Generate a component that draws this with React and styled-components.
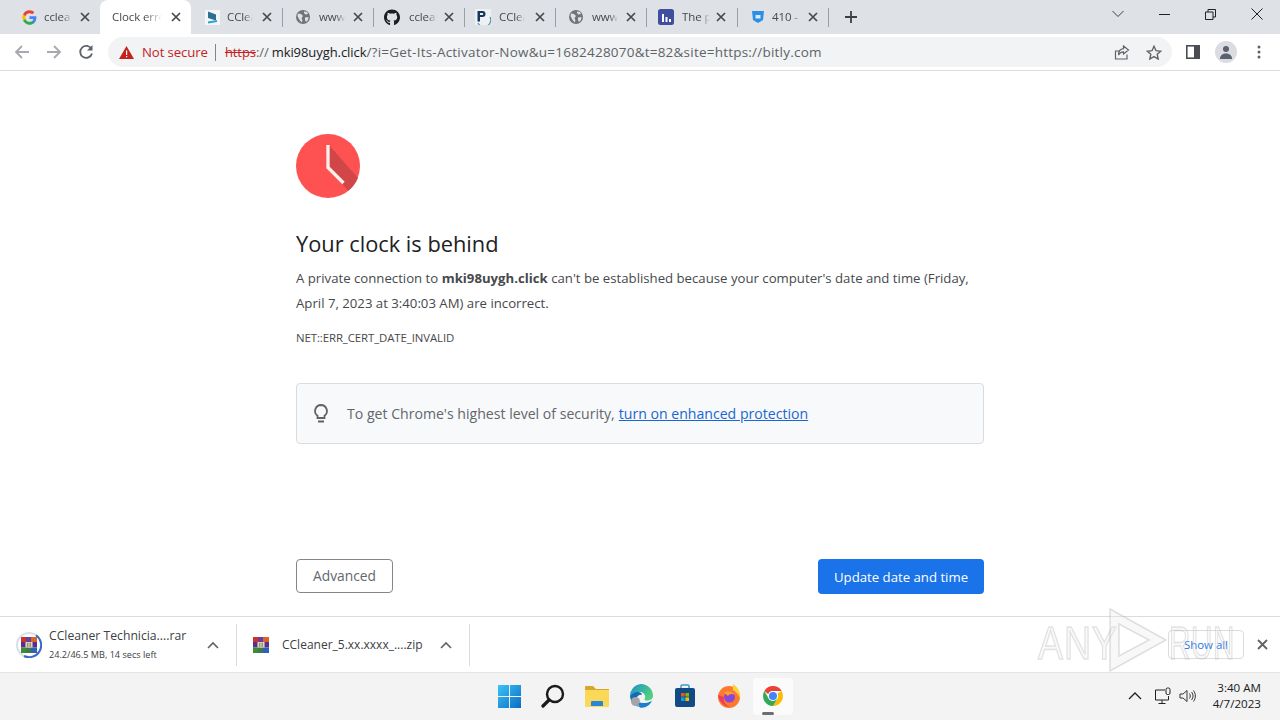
import React from 'react';
import styled, { createGlobalStyle } from 'styled-components';
import { FaGithub } from 'react-icons/fa';

const Global = createGlobalStyle`
  html, body { margin: 0; padding: 0; background: #fff; }
  body { font-family: "Open Sans", "Noto Sans", "Liberation Sans", sans-serif; overflow: hidden; }
`;

const Page = styled.div`
  position: relative; width: 1280px; height: 720px; display: flex; flex-direction: column; overflow: hidden;
`;
const TabStrip = styled.div`
  height: 34px; flex: none; background: #dee1e6; display: flex; align-items: center; padding-left: 9px;
`;
const Tab = styled.div`
  position: relative; width: 91px; height: 34px; flex: none; display: flex; align-items: center;
  padding-left: ${p => p.$pad}px; box-sizing: border-box;
  background: ${p => (p.$active ? '#fff' : 'transparent')};
  border-radius: ${p => (p.$active ? '8px 8px 0 0' : '0')};
  &::after {
    content: ''; display: ${p => (p.$sep ? 'block' : 'none')}; position: absolute; right: -1px; top: 8px; width: 1px; height: 19px; background: #9aa0a6;
  }
`;
const Favicon = styled.span`
  width: 16px; height: 16px; flex: none; display: flex; align-items: center; justify-content: center; margin-right: ${p => p.$gap}px;
`;
const TabTitle = styled.span`
  width: ${p => p.$w}px; flex: none; overflow: hidden; white-space: nowrap; font-size: 11.5px; line-height: 16px; margin-top: -1px; color: #45494e; letter-spacing: -0.1px;
  -webkit-mask-image: linear-gradient(90deg, #000 65%, transparent);
  mask-image: linear-gradient(90deg, #000 65%, transparent);
`;
const TabClose = styled.svg`
  width: 10px; height: 10px; flex: none; position: absolute; right: ${p => p.$r}px; top: 12px;
`;
const NewTab = styled.svg`
  width: 14px; height: 14px; flex: none; margin-left: 16px;
`;
const WinControls = styled.div`
  margin-left: auto; display: flex; align-items: center; height: 28px; margin-top: -6px; padding-right: 17px; gap: 35px;
`;
const Toolbar = styled.div`
  height: 36px; flex: none; background: #fff; border-bottom: 1px solid #dadce0; display: flex; align-items: center; padding-left: 14px;
`;
const NavIcon = styled.svg`
  width: 16px; height: 16px; flex: none; margin-right: ${p => p.$mr}px;
`;
const Omnibox = styled.div`
  width: 1064px; height: 30px; flex: none; margin-left: 14px; border-radius: 15px; background: #f1f3f4; display: flex; align-items: center; padding: 0 10px 0 11px; box-sizing: border-box;
`;
const NotSecure = styled.span`
  font-size: 13.2px; color: #c5221f; margin-left: 8px; letter-spacing: -0.1px;
`;
const OmniSep = styled.span`
  width: 1px; height: 17px; background: #80868b; margin: 0 9px 0 7px;
`;
const UrlText = styled.span`
  font-size: 13px; color: #5f6368; white-space: nowrap; letter-spacing: -0.07px;
`;
const Scheme = styled.span`
  color: #c5221f; text-decoration: line-through;
`;
const Host = styled.span`
  color: #202124; margin-left: 3px;
`;
const UrlRest = styled.span`
  font-size: 13.5px; letter-spacing: .22px;
`;
const OmniRight = styled.div`
  margin-left: auto; display: flex; align-items: center; gap: 16px;
`;
const ToolRight = styled.div`
  display: flex; align-items: center; margin-left: 14px; gap: 15px;
`;
const Avatar = styled.span`
  width: 22px; height: 22px; border-radius: 50%; background: #dadce0; display: flex; align-items: center; justify-content: center; overflow: hidden;
`;
const MenuDots = styled.svg`
  width: 4px; height: 14px; flex: none; margin-left: 5px;
`;
const Main = styled.main`
  flex: 1; min-height: 0; padding: 63px 296px 0; box-sizing: border-box; display: flex; flex-direction: column; background: #fff;
`;
const ClockWrap = styled.svg`
  width: 64px; height: 64px; flex: none;
`;
const Title = styled.h1`
  margin: 31px 0 0; font-size: 21.8px; line-height: 30px; font-weight: 400; color: #202124;
`;
const Para = styled.p`
  margin: 7px 0 0; font-size: 13.2px; line-height: 25px; color: #46494c;
`;
const Code = styled.div`
  margin-top: 13px; font-size: 11.4px; line-height: 18px; color: #46494c; letter-spacing: -0.09px;
`;
const Notice = styled.div`
  margin-top: 36px; height: 61px; box-sizing: border-box; border: 1px solid #dadce0; border-radius: 4px; background: #f8f9fa; display: flex; align-items: center; padding-left: 14px; font-size: 14.1px; color: #63676b;
`;
const NoticeIcon = styled.svg`
  width: 20px; height: 22px; flex: none; margin-right: 16px;
`;
const NoticeLink = styled.a`
  color: #1967d2; text-decoration: underline; margin-left: 4px;
`;
const Buttons = styled.div`
  margin-top: 115px; display: flex; justify-content: space-between; align-items: flex-start;
`;
const Btn = styled.button`
  font-family: inherit; box-sizing: border-box; border-radius: 4px; cursor: pointer;
  padding: 0 0 ${p => (p.$primary ? 0 : 2)}px;
  font-size: ${p => (p.$primary ? 13.2 : 13.8)}px;
  height: ${p => (p.$primary ? 35 : 34)}px; width: ${p => (p.$primary ? 166 : 97)}px;
  background: ${p => (p.$primary ? '#1a73e8' : '#fff')};
  color: ${p => (p.$primary ? '#fff' : '#63676b')};
  border: ${p => (p.$primary ? 'none' : '1px solid #80868b')};
`;
const Shelf = styled.div`
  height: 55px; flex: none; border-top: 1px solid #dadce0; border-bottom: 1px solid #e4e4e4; background: #fff; display: flex; align-items: center;
`;
const DownloadItem = styled.div`
  height: 42px; width: ${p => p.$w}px; flex: none; box-sizing: border-box; border-right: 1px solid #dadce0; display: flex; align-items: center; padding-left: ${p => p.$pad}px; position: relative;
`;
const DlText = styled.div`
  display: flex; flex-direction: column; margin-left: ${p => p.$ml}px; white-space: nowrap; padding-top: ${p => p.$top}px;
`;
const DlName = styled.span`
  font-size: ${p => p.$fs}px; line-height: 17px; color: #3c4043;
`;
const DlSub = styled.span`
  font-size: 9.15px; line-height: 22px; color: #3c4043;
`;
const Caret = styled.svg`
  width: 12px; height: 8px; position: absolute; right: 17px; top: 17px;
`;
const ShelfEnd = styled.div`
  margin-left: auto; display: flex; align-items: center; padding-right: 12px; gap: 13px;
`;
const ShowAll = styled.button`
  width: 76px; height: 29px; border: 1px solid #dadce0; border-radius: 4px; background: #fff; color: #1a73e8; font-family: inherit; font-size: 11.4px; padding: 0;
`;
const Taskbar = styled.div`
  height: 47px; flex: none; background: #f3f3f3; display: flex; align-items: center; position: relative;
`;
const TaskIcons = styled.div`
  display: flex; align-items: center; margin-left: 487px; height: 47px;
`;
const TaskSlot = styled.div`
  width: ${p => (p.$active ? 40 : 44)}px; height: 37px; flex: none; display: flex; align-items: center; justify-content: center; position: relative; margin: 0 ${p => (p.$active ? 2 : 0)}px 1px;
  background: ${p => (p.$active ? '#fbfbfb' : 'transparent')};
  border-radius: 4px;
  &::after {
    content: ''; display: ${p => (p.$active ? 'block' : 'none')}; position: absolute; left: 9px; bottom: 0; width: 12px; height: 3px; border-radius: 2px; background: #6e6e6e;
  }
`;
const Tray = styled.div`
  margin-left: auto; display: flex; align-items: center; padding-right: 19px; margin-bottom: 1px;
`;
const TrayIcon = styled.svg`
  width: ${p => p.$w}px; height: 18px; flex: none; margin-right: ${p => p.$mr}px;
`;
const Clock = styled.div`
  display: flex; flex-direction: column; align-items: flex-end; font-size: 11.6px; line-height: 16px; color: #202020;
`;
const Watermark = styled.div`
  position: absolute; left: 1036px; top: 606px; width: 200px; height: 70px; pointer-events: none;
`;
const WmText = styled.span`
  position: absolute; top: 9px; font-family: "Liberation Sans", sans-serif; font-size: 47px; color: rgba(235,235,235,.28); -webkit-text-stroke: 1.5px rgba(170,170,170,.32); transform-origin: left center; letter-spacing: 1px;
`;
const WmAny = styled(WmText)`
  left: 2px; transform: scaleX(.8);
`;
const WmRun = styled(WmText)`
  left: 133px; transform: scaleX(.63);
`;
const WmPlay = styled.svg`
  position: absolute; left: 70px; top: 1px; width: 62px; height: 66px;
`;

const X = ({ r }) => (
  <TabClose $r={r} viewBox="0 0 10 10"><path d="M1 1l8 8M9 1L1 9" stroke="#45494e" strokeWidth="1.7" /></TabClose>
);
const GoogleG = () => (
  <svg width="15" height="15" viewBox="0 0 24 24">
    <path fill="#4285F4" d="M23 12.3c0-.8-.1-1.600-.2-2.300H12v4.400h6.200c-.3 1.400-1.100 2.600-2.300 3.400v2.900h3.700c2.200-2 3.400-5 3.400-8.400z"/>
    <path fill="#34A853" d="M12 23.500c3.100 0 5.700-1 7.600-2.800l-3.700-2.900c-1 .7-2.300 1.100-3.900 1.100-3 0-5.500-2-6.400-4.700H1.800v3C3.700 21 7.600 23.500 12 23.500z"/>
    <path fill="#FBBC05" d="M5.600 14.200c-.5-1.400-.5-3 0-4.400v-3H1.800a11.500 11.500 0 0 0 0 10.400l3.800-3z"/>
    <path fill="#EA4335" d="M12 5.100c1.700 0 3.200.6 4.400 1.700l3.300-3.300C17.700 1.600 15.100.5 12 .5 7.600.5 3.700 3 1.800 6.800l3.800 3c.9-2.700 3.400-4.700 6.400-4.700z"/>
  </svg>
);
const Globe = () => (
  <svg width="14" height="14" viewBox="0 0 14 14">
    <circle cx="7" cy="7" r="7" fill="#70757a"/>
    <path d="M2 3.500l3 .5 2 2-1.500 2 1 2.500-1 2L3 9 1.500 6zM8 1.500l3 .5 1 2-2.500.5L8 3zM9 7.500l3.500-.5-.5 3-2 2-1-2z" fill="#dfe1e5"/>
  </svg>
);
const WinRar = () => (
  <svg width="16" height="16" viewBox="0 0 16 16" style={{ display: 'block' }}>
    <rect width="6" height="5" fill="#c8352c"/>
    <rect x="5" width="6" height="5" fill="#6a3fa0"/>
    <rect x="10" width="6" height="5" fill="#d8642a"/>
    <rect y="5" width="16" height="5.500" fill="#5a2f8c"/>
    <rect y="10.500" width="6" height="5.500" fill="#3f8a3a"/>
    <rect x="5" y="10.500" width="6" height="5.500" fill="#3c7a4a"/>
    <rect x="10" y="10.500" width="6" height="5.500" fill="#2f62b0"/>
    <rect x="4.500" y="5" width="7" height="5.500" fill="#efe7cf"/>
    <path d="M6.300 5.500v4.500M8 5.500v4.500M9.700 5.500v4.500" stroke="#7a6440" strokeWidth=".8"/>
  </svg>
);

export default function App() {
  return (
    <Page>
      <Global />
      <TabStrip>
        <Tab $pad={12}>
          <Favicon $gap={7}><GoogleG /></Favicon><TabTitle $w={28}>cclea</TabTitle><X r={10} />
        </Tab>
        <Tab $pad={12} $active>
          <TabTitle $w={50}>Clock error</TabTitle><X r={10} />
        </Tab>
        <Tab $pad={13} $sep>
          <Favicon $gap={7}>
            <svg width="15" height="15" viewBox="0 0 15 15"><rect width="15" height="15" fill="#f4f6f8"/><path d="M3 1.500l8 3v6L3 8z" fill="#2f6f8f"/><path d="M3 12.500l9-1.500" stroke="#2ba6cf" strokeWidth="2"/></svg>
          </Favicon><TabTitle $w={26}>CCleaner</TabTitle><X r={10} />
        </Tab>
        <Tab $pad={13} $sep>
          <Favicon $gap={8}><Globe /></Favicon><TabTitle $w={26}>www.ccleaner</TabTitle><X r={10} />
        </Tab>
        <Tab $pad={11} $sep>
          <Favicon $gap={9}><FaGithub size={17} color="#1b1f23" /></Favicon><TabTitle $w={28}>ccleaner</TabTitle><X r={10} />
        </Tab>
        <Tab $pad={11} $sep>
          <Favicon $gap={8}>
            <svg width="16" height="16" viewBox="0 0 16 16"><rect width="16" height="16" rx="1" fill="#eef1f3"/><path d="M3 14a6.500 6.500 0 0 0 12-6" fill="none" stroke="#5b93a6" strokeWidth="1.200"/><path d="M2.500 2h5a3 3 0 0 1 0 6H5v4.500H2.500zM5 4v2h2.300a1 1 0 0 0 0-2z" fill="#16365c" fillRule="evenodd"/></svg>
          </Favicon><TabTitle $w={26}>CCleaner</TabTitle><X r={10} />
        </Tab>
        <Tab $pad={13} $sep>
          <Favicon $gap={8}><Globe /></Favicon><TabTitle $w={26}>www.ccleaner</TabTitle><X r={10} />
        </Tab>
        <Tab $pad={12} $sep>
          <Favicon $gap={8}>
            <svg width="16" height="16" viewBox="0 0 16 16"><rect width="16" height="16" rx="2.500" fill="#3f4f9e"/><path d="M4 5h2v8H4zM7.500 8h2v5h-2zM11 10h2v3h-2z" fill="#fff"/></svg>
          </Favicon><TabTitle $w={28}>The page</TabTitle><X r={11} />
        </Tab>
        <Tab $pad={13} $sep>
          <Favicon $gap={6}>
            <svg width="14" height="14" viewBox="0 0 14 14"><path d="M1 1h12l-1 9-5 3-5-3z" fill="#2b8fe6"/><rect x="4.500" y="5" width="5" height="3.500" fill="#d7ecff"/></svg>
          </Favicon><TabTitle $w={30}>410 - Gone</TabTitle><X r={10} />
        </Tab>
        <NewTab viewBox="0 0 14 14"><path d="M7 1v12M1 7h12" stroke="#3c4043" strokeWidth="1.800"/></NewTab>
        <WinControls>
          <svg width="12" height="8" viewBox="0 0 12 8"><path d="M.5 1l5.500 5.500L11.500 1" stroke="#3c4043" fill="none"/></svg>
          <svg width="11" height="11" viewBox="0 0 11 11"><path d="M0 5.500h11" stroke="#202124"/></svg>
          <svg width="11" height="11" viewBox="0 0 11 11"><path d="M.5 3h7.500v7.500H.5zM3 3V.5h7.500V8H8" stroke="#202124" fill="none"/></svg>
          <svg width="12" height="12" viewBox="0 0 12 12"><path d="M.5.500l11 11M11.500.5l-11 11" stroke="#202124"/></svg>
        </WinControls>
      </TabStrip>
      <Toolbar>
        <NavIcon $mr={16} viewBox="0 0 16 16"><path d="M15 8H2M8 2L2 8l6 6" fill="none" stroke="#a6a9ad" strokeWidth="1.800"/></NavIcon>
        <NavIcon $mr={16} viewBox="0 0 16 16"><path d="M1 8h13M8 2l6 6-6 6" fill="none" stroke="#a6a9ad" strokeWidth="1.800"/></NavIcon>
        <NavIcon $mr={0} viewBox="0 0 16 16"><path d="M13.500 5A6 6 0 1 0 14 9.500" fill="none" stroke="#5f6368" strokeWidth="1.800"/><path d="M14.500 1v5.500H9z" fill="#5f6368"/></NavIcon>
        <Omnibox>
          <svg width="15" height="13" viewBox="0 0 15 13"><path d="M7.500 0L15 13H0z" fill="#c5221f"/><path d="M7 4.500h1.200v4.500H7zM7 10h1.200v1.300H7z" fill="#fff"/></svg>
          <NotSecure>Not secure</NotSecure>
          <OmniSep />
          <UrlText><Scheme>https</Scheme>://<Host>mki98uygh.click</Host><UrlRest>/?i=Get-Its-Activator-Now&amp;u=1682428070&amp;t=82&amp;site=https://bitly.com</UrlRest></UrlText>
          <OmniRight>
            <svg width="16" height="15" viewBox="0 0 16 15"><path d="M13 9.500V14H1.500V6H5M9.500 1l5 4-5 4V6.800C7 6.800 5.500 8 4.500 10c0-3.500 2-6 5-6.300z" fill="none" stroke="#5f6368" strokeWidth="1.200"/></svg>
            <svg width="16" height="15" viewBox="0 0 16 15"><path d="M8 1.300l2 4.400 4.700.5-3.500 3.100 1 4.700L8 11.600l-4.200 2.400 1-4.700-3.500-3.100L6 5.700z" fill="none" stroke="#5f6368" strokeWidth="1.400"/></svg>
          </OmniRight>
        </Omnibox>
        <ToolRight>
          <svg width="14" height="14" viewBox="0 0 14 14"><rect x=".8" y=".8" width="12.400" height="12.400" fill="none" stroke="#4a4e52" strokeWidth="1.600"/><rect x="8" y="1" width="5" height="12" fill="#4a4e52"/></svg>
          <Avatar>
            <svg width="14" height="14" viewBox="0 0 14 14"><circle cx="7" cy="4" r="3" fill="#5a6071"/><path d="M1 14c0-4 3-5.500 6-5.500s6 1.500 6 5.500z" fill="#5a6071"/></svg>
          </Avatar>
          <MenuDots viewBox="0 0 4 14"><circle cx="2" cy="2" r="1.500" fill="#5f6368"/><circle cx="2" cy="7" r="1.500" fill="#5f6368"/><circle cx="2" cy="12" r="1.500" fill="#5f6368"/></MenuDots>
        </ToolRight>
      </Toolbar>
      <Main>
        <ClockWrap viewBox="0 0 64 64">
          <circle cx="32" cy="32" r="32" fill="#fe5252"/>
          <path d="M33 11l29 33A32 32 0 0 1 52 57L32 32z" fill="#c94545" opacity=".85"/>
          <path d="M32 11v22.500L47.500 49" fill="none" stroke="#fff2ee" strokeWidth="3.300"/>
        </ClockWrap>
        <Title>Your clock is behind</Title>
        <Para>A private connection to <b>mki98uygh.click</b> can't be established because your computer's date and time (Friday, April 7, 2023 at 3:40:03 AM) are incorrect.</Para>
        <Code>NET::ERR_CERT_DATE_INVALID</Code>
        <Notice>
          <NoticeIcon viewBox="0 0 20 22"><path d="M10 2a6 6 0 0 0-3.500 10.800V15h7v-2.200A6 6 0 0 0 10 2zM7 18.500h6" fill="none" stroke="#5f6368" strokeWidth="1.800"/></NoticeIcon>
          To get Chrome's highest level of security,<NoticeLink href="#">turn on enhanced protection</NoticeLink>
        </Notice>
        <Buttons>
          <Btn>Advanced</Btn>
          <Btn $primary>Update date and time</Btn>
        </Buttons>
      </Main>
      <Shelf>
        <DownloadItem $w={237} $pad={16}>
          <svg width="26" height="26" viewBox="0 0 26 26" style={{ flex: 'none' }}>
            <circle cx="13" cy="13" r="12" fill="none" stroke="#d7dfe9" strokeWidth="2"/>
            <path d="M8 24A12 12 0 0 0 20 3.300" fill="none" stroke="#3b68c8" strokeWidth="2"/>
            <foreignObject x="5" y="5" width="16" height="16"><WinRar /></foreignObject>
          </svg>
          <DlText $ml={7} $top={4}><DlName $fs={12.2}>CCleaner Technicia....rar</DlName><DlSub>24.2/46.5 MB, 14 secs left</DlSub></DlText>
          <Caret viewBox="0 0 12 8"><path d="M1 7l5-5 5 5" fill="none" stroke="#5f6368" strokeWidth="1.600"/></Caret>
        </DownloadItem>
        <DownloadItem $w={233} $pad={16}>
          <WinRar />
          <DlText $ml={13} $top={0}><DlName $fs={12}>CCleaner_5.xx.xxxx_....zip</DlName></DlText>
          <Caret viewBox="0 0 12 8"><path d="M1 7l5-5 5 5" fill="none" stroke="#5f6368" strokeWidth="1.600"/></Caret>
        </DownloadItem>
        <ShelfEnd>
          <ShowAll>Show all</ShowAll>
          <svg width="11" height="11" viewBox="0 0 11 11"><path d="M1 1l9 9M10 1l-9 9" stroke="#5f6368" strokeWidth="1.800"/></svg>
        </ShelfEnd>
      </Shelf>
      <Taskbar>
        <TaskIcons>
          <TaskSlot>
            <svg width="23" height="23" viewBox="0 0 24 24"><defs><linearGradient id="w" x1="0" y1="0" x2="1" y2="1"><stop offset="0" stopColor="#3bc4f5"/><stop offset="1" stopColor="#0a6cc4"/></linearGradient></defs><path d="M0 0h11.500v11.500H0zM12.500 0H24v11.500H12.500zM0 12.500h11.500V24H0zM12.500 12.500H24V24H12.500z" fill="url(#w)"/></svg>
          </TaskSlot>
          <TaskSlot>
            <svg width="24" height="24" viewBox="0 0 24 24"><circle cx="14" cy="10" r="8" fill="none" stroke="#1a1a1a" strokeWidth="2.400"/><path d="M8 16l-6 6" stroke="#1a1a1a" strokeWidth="3.200" strokeLinecap="round"/></svg>
          </TaskSlot>
          <TaskSlot>
            <svg width="24" height="22" viewBox="0 0 24 22"><path d="M0 2a1 1 0 0 1 1-1h7l3 3h13v4H0z" fill="#d9a62c"/><path d="M0 5h24v16a1 1 0 0 1-1 1H1a1 1 0 0 1-1-1z" fill="#fcd858"/><path d="M6 21v-4a1 1 0 0 1 1-1h10a1 1 0 0 1 1 1v4z" fill="#2a86d5"/></svg>
          </TaskSlot>
          <TaskSlot>
            <svg width="24" height="24" viewBox="0 0 24 24"><defs><linearGradient id="eg" x1="0" y1="0" x2="1" y2=".6"><stop offset="0" stopColor="#1b8fd0"/><stop offset="1" stopColor="#52d17c"/></linearGradient></defs><path d="M12 0a12 12 0 0 1 12 12c0 3-3 4.500-6 4.500-2.500 0-3-1-2-2.500 1-2-1-6-5-6-4 0-8 2-10 5A12 12 0 0 1 12 0z" fill="url(#eg)"/><path d="M1 13c1-3 5-5 8-5 2 0 4 1 4 3-3-1-6 2-6 6 0 3 2 5 4 6A12 12 0 0 1 1 13z" fill="#1668b5"/><circle cx="6.500" cy="17.500" r="4.500" fill="#a5a5a5"/><path d="M11 23.500c-2-2-2-4 0-5 3 1 8 1 12-2-2 5-7 8-12 7z" fill="#1b7fc9"/></svg>
          </TaskSlot>
          <TaskSlot>
            <svg width="24" height="24" viewBox="0 0 24 24"><path d="M2 6a2 2 0 0 1 2-2h16a2 2 0 0 1 2 2v15a2 2 0 0 1-2 2H4a2 2 0 0 1-2-2z" fill="#114a84"/><path d="M8 4V2a1 1 0 0 1 1-1h6a1 1 0 0 1 1 1v2" fill="none" stroke="#3a9bd8" strokeWidth="1.500"/><path d="M8 9h3.600v3.600H8z" fill="#f25022"/><path d="M12.400 9H16v3.600h-3.600z" fill="#7fba00"/><path d="M8 13.400h3.600V17H8z" fill="#00a4ef"/><path d="M12.400 13.400H16V17h-3.600z" fill="#ffb900"/></svg>
          </TaskSlot>
          <TaskSlot>
            <svg width="24" height="24" viewBox="0 0 24 24"><circle cx="12" cy="13" r="11" fill="#fb7a2c"/><path d="M16 0c5 3 8 9 7 14-2-4-4-6-7-8z" fill="#ffcf3a"/><path d="M1 11c1 6 6 12 12 12-5-2-7-6-6-10z" fill="#ef3d5c"/><circle cx="12.500" cy="13" r="5.500" fill="#8c46d9"/><path d="M7 9c3-3 9-2 11 2-3-2-6-1-7 1-1-1-3-2-4-3z" fill="#ff9d2e"/></svg>
          </TaskSlot>
          <TaskSlot $active>
            <svg width="24" height="24" viewBox="0 0 48 48"><path d="M24 4a20 20 0 0 1 17.320 10H24a10 10 0 0 0-9.300 6.300L6.700 14A20 20 0 0 1 24 4z" fill="#ea4335"/><path d="M41.320 14A20 20 0 0 1 24 44l8.660-15A10 10 0 0 0 32.660 19z" fill="#fbbc05"/><path d="M24 44A20 20 0 0 1 6.680 14l8.660 15a10 10 0 0 0 8.660 5l8.660-5z" fill="#34a853"/><circle cx="24" cy="24" r="10" fill="#fff"/><circle cx="24" cy="24" r="8" fill="#4285f4"/></svg>
          </TaskSlot>
        </TaskIcons>
        <Tray>
          <TrayIcon $w={14} $mr={13} viewBox="0 0 14 18"><path d="M1 12l6-6 6 6" fill="none" stroke="#202020" strokeWidth="1.300"/></TrayIcon>
          <TrayIcon $w={16} $mr={8} viewBox="0 0 16 18"><path d="M10 3H.5v10h13V9M7 13v3M3.500 16.500h7" fill="none" stroke="#202020"/><rect x="11" y="1" width="4" height="6.500" rx="1.500" fill="none" stroke="#202020"/></TrayIcon>
          <TrayIcon $w={17} $mr={17} viewBox="0 0 17 18"><path d="M1 7h3l4-3.500v11L4 11H1zM10.500 6.500c1 1.500 1 3.500 0 5M12.500 5c2 2.500 2 5.500 0 8M14.500 3.500c2.500 3.500 2.500 7.500 0 11" fill="none" stroke="#202020" strokeWidth=".9"/></TrayIcon>
          <Clock><span>3:40 AM</span><span>4/7/2023</span></Clock>
        </Tray>
      </Taskbar>
      <Watermark>
        <WmAny>ANY</WmAny>
        <WmPlay viewBox="0 0 62 66"><path d="M4 2l56 31L4 64V2zM13 17v32l30-16z" fillRule="evenodd" fill="rgba(235,235,235,.35)" stroke="rgba(170,170,170,.35)" strokeWidth="1.500"/></WmPlay>
        <WmRun>RUN</WmRun>
      </Watermark>
    </Page>
  );
}
